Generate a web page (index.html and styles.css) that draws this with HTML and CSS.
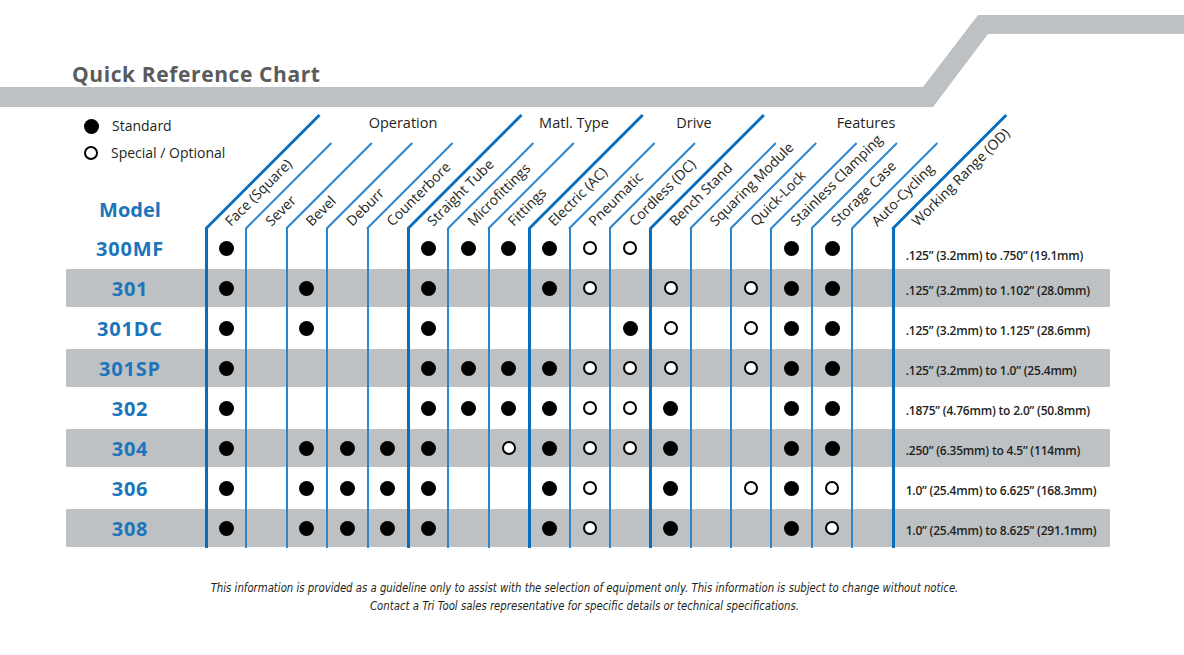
FILE: index.html
```html
<!DOCTYPE html>
<html lang="en">
<head>
<meta charset="utf-8">
<title>Quick Reference Chart</title>
<link rel="stylesheet" href="styles.css">
</head>
<body>
<header class="banner">
  <svg class="banner-shape" width="1184" height="110" viewBox="0 0 1184 110" aria-hidden="true">
    <polygon points="0,87 923,87 978,15 1184,15 1184,34 988,34 933,107 0,107" fill="#bdc1c4"/>
  </svg>
  <h1 class="title">Quick Reference Chart</h1>
</header>

<main class="chart">
  <div class="head">
    <div class="head-left">
      <ul class="legend">
        <li><span class="dot"></span>Standard</li>
        <li><span class="dot o"></span>Special / Optional</li>
      </ul>
      <div class="model-label">Model</div>
    </div>
    <div class="head-right">
      <svg class="diag" width="905" height="121" viewBox="0 0 905 121">
        <g class="thin">
          <path d="M41.4,122 V121 L126.4,36"/>
          <path d="M81.8,122 V121 L166.8,36"/>
          <path d="M122.2,122 V121 L207.2,36"/>
          <path d="M162.6,122 V121 L247.6,36"/>
          <path d="M243.4,122 V121 L328.4,36"/>
          <path d="M283.8,122 V121 L368.8,36"/>
          <path d="M364.6,122 V121 L449.6,36"/>
          <path d="M405,122 V121 L490,36"/>
          <path d="M485.8,122 V121 L570.8,36"/>
          <path d="M526.2,122 V121 L611.2,36"/>
          <path d="M566.6,122 V121 L651.6,36"/>
          <path d="M607,122 V121 L692,36"/>
          <path d="M647.4,122 V121 L732.4,36"/>
        </g>
        <g class="thick">
          <path d="M1.5,122 V121 L114.5,8"/>
          <path d="M203.5,122 V121 L316.5,8"/>
          <path d="M324.7,122 V121 L437.7,8"/>
          <path d="M445.9,122 V121 L558.9,8"/>
          <path d="M688.3,122 V121 L801.3,8"/>
        </g>
        <g class="group">
          <text x="198" y="21">Operation</text>
          <text x="369" y="21">Matl. Type</text>
          <text x="489" y="21">Drive</text>
          <text x="661" y="21">Features</text>
        </g>
        <g class="lbl">
          <text transform="translate(26,120) rotate(-45)">Face (Square)</text>
          <text transform="translate(66.4,120) rotate(-45)">Sever</text>
          <text transform="translate(106.8,120) rotate(-45)">Bevel</text>
          <text transform="translate(147.2,120) rotate(-45)">Deburr</text>
          <text transform="translate(187.6,120) rotate(-45)">Counterbore</text>
          <text transform="translate(228,120) rotate(-45)">Straight Tube</text>
          <text transform="translate(268.4,120) rotate(-45)">Microfittings</text>
          <text transform="translate(308.8,120) rotate(-45)">Fittings</text>
          <text transform="translate(349.2,120) rotate(-45)">Electric (AC)</text>
          <text transform="translate(389.6,120) rotate(-45)">Pneumatic</text>
          <text transform="translate(430,120) rotate(-45)">Cordless (DC)</text>
          <text transform="translate(470.4,120) rotate(-45)">Bench Stand</text>
          <text transform="translate(510.8,120) rotate(-45)">Squaring Module</text>
          <text transform="translate(551.2,120) rotate(-45)">Quick-Lock</text>
          <text transform="translate(591.6,120) rotate(-45)">Stainless Clamping</text>
          <text transform="translate(632,120) rotate(-45)">Storage Case</text>
          <text transform="translate(672.4,120) rotate(-45)">Auto-Cycling</text>
          <text transform="translate(712.8,120) rotate(-45)">Working Range (OD)</text>
        </g>
      </svg>
    </div>
  </div>

  <div class="rows">
    <div class="row first">
      <div class="name">300MF</div>
      <div class="c t"><span class="dot"></span></div><div class="c"></div><div class="c"></div><div class="c"></div><div class="c"></div>
      <div class="c t"><span class="dot"></span></div><div class="c"><span class="dot"></span></div><div class="c"><span class="dot"></span></div>
      <div class="c t"><span class="dot"></span></div><div class="c"><span class="dot o"></span></div><div class="c"><span class="dot o"></span></div>
      <div class="c t"></div><div class="c"></div><div class="c"></div><div class="c"><span class="dot"></span></div><div class="c"><span class="dot"></span></div><div class="c"></div>
      <div class="range">.125” (3.2mm) to .750” (19.1mm)</div>
    </div>
    <div class="row g">
      <div class="name">301</div>
      <div class="c t"><span class="dot"></span></div><div class="c"></div><div class="c"><span class="dot"></span></div><div class="c"></div><div class="c"></div>
      <div class="c t"><span class="dot"></span></div><div class="c"></div><div class="c"></div>
      <div class="c t"><span class="dot"></span></div><div class="c"><span class="dot o"></span></div><div class="c"></div>
      <div class="c t"><span class="dot o"></span></div><div class="c"></div><div class="c"><span class="dot o"></span></div><div class="c"><span class="dot"></span></div><div class="c"><span class="dot"></span></div><div class="c"></div>
      <div class="range">.125” (3.2mm) to 1.102” (28.0mm)</div>
    </div>
    <div class="row">
      <div class="name">301DC</div>
      <div class="c t"><span class="dot"></span></div><div class="c"></div><div class="c"><span class="dot"></span></div><div class="c"></div><div class="c"></div>
      <div class="c t"><span class="dot"></span></div><div class="c"></div><div class="c"></div>
      <div class="c t"></div><div class="c"></div><div class="c"><span class="dot"></span></div>
      <div class="c t"><span class="dot o"></span></div><div class="c"></div><div class="c"><span class="dot o"></span></div><div class="c"><span class="dot"></span></div><div class="c"><span class="dot"></span></div><div class="c"></div>
      <div class="range">.125” (3.2mm) to 1.125” (28.6mm)</div>
    </div>
    <div class="row g">
      <div class="name">301SP</div>
      <div class="c t"><span class="dot"></span></div><div class="c"></div><div class="c"></div><div class="c"></div><div class="c"></div>
      <div class="c t"><span class="dot"></span></div><div class="c"><span class="dot"></span></div><div class="c"><span class="dot"></span></div>
      <div class="c t"><span class="dot"></span></div><div class="c"><span class="dot o"></span></div><div class="c"><span class="dot o"></span></div>
      <div class="c t"><span class="dot o"></span></div><div class="c"></div><div class="c"><span class="dot o"></span></div><div class="c"><span class="dot"></span></div><div class="c"><span class="dot"></span></div><div class="c"></div>
      <div class="range">.125” (3.2mm) to 1.0” (25.4mm)</div>
    </div>
    <div class="row">
      <div class="name">302</div>
      <div class="c t"><span class="dot"></span></div><div class="c"></div><div class="c"></div><div class="c"></div><div class="c"></div>
      <div class="c t"><span class="dot"></span></div><div class="c"><span class="dot"></span></div><div class="c"><span class="dot"></span></div>
      <div class="c t"><span class="dot"></span></div><div class="c"><span class="dot o"></span></div><div class="c"><span class="dot o"></span></div>
      <div class="c t"><span class="dot"></span></div><div class="c"></div><div class="c"></div><div class="c"><span class="dot"></span></div><div class="c"><span class="dot"></span></div><div class="c"></div>
      <div class="range">.1875” (4.76mm) to 2.0” (50.8mm)</div>
    </div>
    <div class="row g">
      <div class="name">304</div>
      <div class="c t"><span class="dot"></span></div><div class="c"></div><div class="c"><span class="dot"></span></div><div class="c"><span class="dot"></span></div><div class="c"><span class="dot"></span></div>
      <div class="c t"><span class="dot"></span></div><div class="c"></div><div class="c"><span class="dot o"></span></div>
      <div class="c t"><span class="dot"></span></div><div class="c"><span class="dot o"></span></div><div class="c"><span class="dot o"></span></div>
      <div class="c t"><span class="dot"></span></div><div class="c"></div><div class="c"></div><div class="c"><span class="dot"></span></div><div class="c"><span class="dot"></span></div><div class="c"></div>
      <div class="range">.250” (6.35mm) to 4.5” (114mm)</div>
    </div>
    <div class="row">
      <div class="name">306</div>
      <div class="c t"><span class="dot"></span></div><div class="c"></div><div class="c"><span class="dot"></span></div><div class="c"><span class="dot"></span></div><div class="c"><span class="dot"></span></div>
      <div class="c t"><span class="dot"></span></div><div class="c"></div><div class="c"></div>
      <div class="c t"><span class="dot"></span></div><div class="c"><span class="dot o"></span></div><div class="c"></div>
      <div class="c t"><span class="dot"></span></div><div class="c"></div><div class="c"><span class="dot o"></span></div><div class="c"><span class="dot"></span></div><div class="c"><span class="dot o"></span></div><div class="c"></div>
      <div class="range">1.0” (25.4mm) to 6.625” (168.3mm)</div>
    </div>
    <div class="row g">
      <div class="name">308</div>
      <div class="c t"><span class="dot"></span></div><div class="c"></div><div class="c"><span class="dot"></span></div><div class="c"><span class="dot"></span></div><div class="c"><span class="dot"></span></div>
      <div class="c t"><span class="dot"></span></div><div class="c"></div><div class="c"></div>
      <div class="c t"><span class="dot"></span></div><div class="c"><span class="dot o"></span></div><div class="c"></div>
      <div class="c t"><span class="dot"></span></div><div class="c"></div><div class="c"></div><div class="c"><span class="dot"></span></div><div class="c"><span class="dot o"></span></div><div class="c"></div>
      <div class="range">1.0” (25.4mm) to 8.625” (291.1mm)</div>
    </div>
  </div>
</main>

<footer class="note">
  <p>This information is provided as a guideline only to assist with the selection of equipment only. This information is subject to change without notice.</p>
  <p>Contact a Tri Tool sales representative for specific details or technical specifications.</p>
</footer>
</body>
</html>
```

FILE: styles.css
```css
* { box-sizing: border-box; }

html, body {
  margin: 0;
  padding: 0;
  background: #ffffff;
}

body {
  width: 1184px;
  height: 655px;
  overflow: hidden;
  font-family: "Open Sans", "Liberation Sans", sans-serif;
  color: #231f20;
}

/* ---------- banner ---------- */
.banner {
  position: relative;
  height: 107px;
}

.banner-shape {
  position: absolute;
  left: 0;
  top: 0;
  z-index: 0;
}

.title {
  position: relative;
  z-index: 1;
  margin: 0;
  padding: 60px 0 0 72px;
  font-size: 21px;
  line-height: 28px;
  font-weight: 700;
  letter-spacing: 0.6px;
  color: #5a5b5d;
}

/* ---------- chart ---------- */
.chart {
  margin-left: 66px;
  width: 1044px;
}

.head,
.row {
  display: grid;
  grid-template-columns: 139px repeat(17, 40.4px) 1fr;
}

.head {
  height: 121px;
}

.head-left {
  grid-column: 1;
  display: flex;
  flex-direction: column;
  justify-content: space-between;
  padding: 10px 0 6px 0;
}

.head-right {
  grid-column: 2 / -1;
  position: relative;
}

.diag {
  display: block;
  overflow: visible;
}

.diag path {
  fill: none;
  stroke-linejoin: miter;
}

.diag .thin path {
  stroke: #2a86cf;
  stroke-width: 2;
}

.diag .thick path {
  stroke: #0a6ebd;
  stroke-width: 3;
}

.diag .group text {
  font-family: "Open Sans", sans-serif;
  font-size: 14.5px;
  fill: #231f20;
  text-anchor: middle;
}

.diag .lbl text {
  font-family: "Open Sans", sans-serif;
  font-size: 14px;
  fill: #231f20;
}

.legend {
  list-style: none;
  margin: 0;
  padding: 0 0 0 18px;
  display: flex;
  flex-direction: column;
  gap: 9px;
  white-space: nowrap;
}

.legend li {
  display: flex;
  align-items: center;
  gap: 13px;
  font-size: 14px;
  line-height: 18px;
}

.model-label {
  padding-right: 11px;
  text-align: center;
  font-size: 20px;
  line-height: 24px;
  font-weight: 700;
  color: #1b75bb;
}

/* ---------- rows ---------- */
.row {
  height: 40px;
}

.row.g {
  background: linear-gradient(to bottom,
    transparent 0, transparent 1px,
    #bdc1c4 1px, #bdc1c4 39px,
    transparent 39px);
}

.name {
  display: flex;
  align-items: center;
  justify-content: center;
  padding-right: 11px;
  font-size: 20px;
  font-weight: 700;
  letter-spacing: 0.8px;
  color: #1b75bb;
}

.c {
  display: flex;
  align-items: center;
  justify-content: center;
  border-left: 2px solid #2a86cf;
}

.c.t {
  border-left: 3px solid #0a6ebd;
}

.range {
  display: flex;
  align-items: center;
  padding: 4px 0 0 11px;
  border-left: 3px solid #0a6ebd;
  font-size: 12px;
  font-weight: 600;
  letter-spacing: -0.2px;
  white-space: nowrap;
  color: #231f20;
}

.row.first .range {
  padding-top: 14px;
}

.dot {
  display: inline-block;
  width: 15px;
  height: 15px;
  border-radius: 50%;
  background: #000;
  flex: none;
}

.dot.o {
  width: 14px;
  height: 14px;
  background: #fff;
  border: 2px solid #000;
}

/* ---------- footer ---------- */
.note {
  margin-top: 31px;
  padding-right: 15px;
  text-align: center;
  font-family: "Liberation Sans Narrow", "DejaVu Sans Condensed", "Liberation Sans", sans-serif;
  font-style: italic;
  font-size: 13px;
  line-height: 18px;
  color: #231f20;
}

.note p {
  margin: 0;
  transform: scaleX(0.867);
  transform-origin: 584.5px 0;
  white-space: nowrap;
}
```
